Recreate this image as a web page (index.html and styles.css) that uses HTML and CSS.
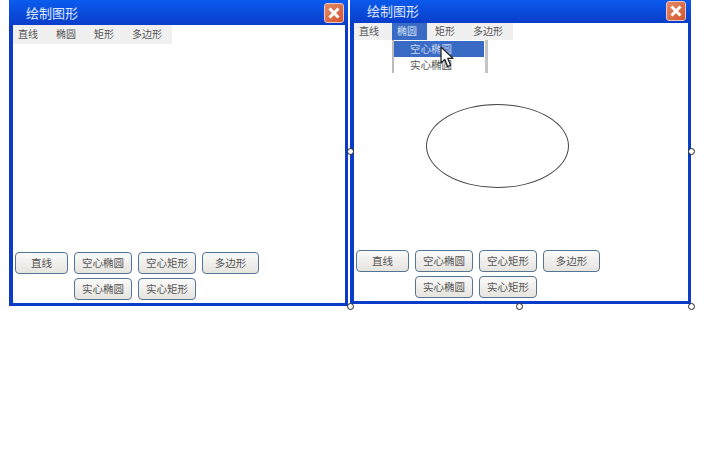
FILE: index.html
```html
<!DOCTYPE html>
<html lang="zh-CN">
<head>
    <meta charset="UTF-8">
    <title>绘制图形</title>
    <link rel="stylesheet" href="styles.css">
</head>
<body>
    <div class="desktop">
        <div class="window">
            <div class="title-bar">
                <span class="title">绘制图形</span>
                <div class="close-button">
                    <svg width="14" height="14" viewBox="0 0 14 14"><path d="M2.5 2.5L11.5 11.5M11.5 2.5L2.5 11.5" stroke="#fff" stroke-width="3"/></svg>
                </div>
            </div>
            <div class="content">
                <div class="menu-bar">
                    <div class="menu-item">直线</div>
                    <div class="menu-item">椭圆</div>
                    <div class="menu-item">矩形</div>
                    <div class="menu-item">多边形</div>
                </div>
                <div class="canvas"></div>
                <div class="buttons">
                    <div class="btn">直线</div>
                    <div class="btn">空心椭圆</div>
                    <div class="btn">空心矩形</div>
                    <div class="btn">多边形</div>
                    <div class="btn second-row">实心椭圆</div>
                    <div class="btn">实心矩形</div>
                </div>
            </div>
        </div>

        <div class="window selected">
            <div class="title-bar">
                <span class="title">绘制图形</span>
                <div class="close-button">
                    <svg width="14" height="14" viewBox="0 0 14 14"><path d="M2.5 2.5L11.5 11.5M11.5 2.5L2.5 11.5" stroke="#fff" stroke-width="3"/></svg>
                </div>
            </div>
            <div class="content">
                <div class="menu-bar">
                    <div class="menu-item">直线</div>
                    <div class="menu-item active">椭圆</div>
                    <div class="menu-item">矩形</div>
                    <div class="menu-item">多边形</div>
                </div>
                <div class="canvas">
                    <div class="dropdown">
                        <div class="dropdown-item hover">空心椭圆</div>
                        <div class="dropdown-item">实心椭圆</div>
                    </div>
                    <div class="ellipse"></div>
                    <svg class="cursor" width="14" height="22" viewBox="0 0 14 22">
                        <path d="M1 1V17L4.8 13.4L7.6 20.5L10.6 19.2L7.8 12.4H13Z" fill="#fff" stroke="#222" stroke-width="1.3" stroke-linejoin="round"/>
                    </svg>
                </div>
                <div class="buttons">
                    <div class="btn">直线</div>
                    <div class="btn">空心椭圆</div>
                    <div class="btn">空心矩形</div>
                    <div class="btn">多边形</div>
                    <div class="btn second-row">实心椭圆</div>
                    <div class="btn">实心矩形</div>
                </div>
            </div>
            <div class="handle handle-left"></div>
            <div class="handle handle-right"></div>
            <div class="handle handle-bottom-left"></div>
            <div class="handle handle-bottom"></div>
            <div class="handle handle-bottom-right"></div>
        </div>
    </div>
</body>
</html>
```

FILE: styles.css
```css
* {
    box-sizing: border-box;
}

body {
    margin: 0;
    width: 720px;
    height: 450px;
    overflow: hidden;
    background-color: #fff;
    font-family: "Noto Sans CJK SC", "Liberation Sans", sans-serif;
}

.desktop {
    display: flex;
    align-items: flex-start;
    gap: 2px;
    padding-left: 9px;
}

.window {
    position: relative;
    display: flex;
    flex-direction: column;
    width: 339px;
    height: 306px;
    background: linear-gradient(#0a5cf0, #0a3cc8 26px);
}

.window.selected {
    width: 341px;
    margin-top: -2px;
}

.title-bar {
    display: flex;
    align-items: center;
    justify-content: space-between;
    flex: 0 0 25px;
    padding: 0 4px 0 17px;
}

.selected .title-bar {
    padding-right: 5px;
}

.title {
    color: #dfe8ff;
    font-size: 13px;
}

.close-button {
    display: flex;
    align-items: center;
    justify-content: center;
    width: 20px;
    height: 20px;
    border: 1px solid #e8c8c0;
    border-radius: 3px;
    background: linear-gradient(135deg, #e58a68, #d2552f);
}

.content {
    display: flex;
    flex: 1;
    flex-direction: column;
    margin: 0 3px 3px 4px;
    background-color: #fff;
}

.menu-bar {
    display: flex;
    align-self: flex-start;
    height: 19px;
    background-color: #f0f0f0;
}

.menu-item {
    padding: 0 10px 0 5px;
    margin-right: 3px;
    color: #555;
    font-size: 10px;
    line-height: 18px;
}

.menu-item:last-child {
    margin-right: 0;
}

.menu-item.active {
    background-color: #3a6bc4;
    color: #d8e2f5;
}

.selected .menu-bar {
    height: 17px;
}

.selected .menu-item {
    line-height: 16px;
}

.canvas {
    position: relative;
    flex: 1;
}

.dropdown {
    position: absolute;
    left: 38px;
    top: 0;
    width: 96px;
    height: 33px;
    padding: 1px 1px 0 0;
    border-left: 2px solid #bbb;
    border-right: 3px solid #c4c4c4;
    background-color: #fff;
}

.dropdown-item {
    height: 16px;
    padding-left: 16px;
    color: #555;
    font-size: 10.5px;
    line-height: 16px;
}

.dropdown-item.hover {
    background-color: #3a6bc4;
    color: #c8d6f0;
}

.ellipse {
    position: absolute;
    left: 72px;
    top: 64px;
    width: 143px;
    height: 84px;
    border: 1px solid #444;
    border-radius: 50%;
}

.cursor {
    position: absolute;
    left: 86px;
    top: 6px;
}

.buttons {
    display: grid;
    grid-template-columns: 53px 58px 58px 57px;
    grid-auto-rows: 22px;
    gap: 4px 6px;
    padding: 0 0 3px 2px;
}

.btn {
    border: 1px solid #557595;
    border-radius: 4px;
    background: linear-gradient(#fafafa, #e6e4de);
    color: #555;
    font-size: 10.5px;
    line-height: 20px;
    text-align: center;
}

.btn.second-row {
    grid-column: 2;
}

.handle {
    position: absolute;
    width: 7px;
    height: 7px;
    border: 1px solid #222;
    border-radius: 50%;
    background-color: #fff;
}

.handle-left {
    left: -3px;
    top: 150px;
}

.handle-right {
    right: -4px;
    top: 150px;
}

.handle-bottom-left {
    left: -3px;
    bottom: -6px;
}

.handle-bottom {
    left: 166px;
    bottom: -6px;
}

.handle-bottom-right {
    right: -4px;
    bottom: -6px;
}
```
